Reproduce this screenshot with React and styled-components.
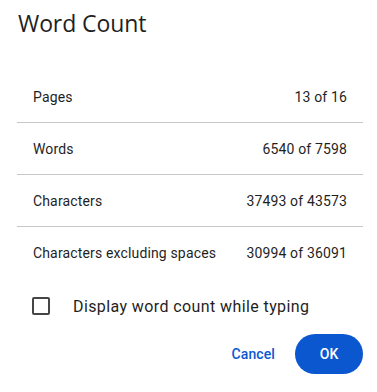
import React from "react";
import styled, { createGlobalStyle } from "styled-components";

const Global = createGlobalStyle`
  html, body { margin: 0; padding: 0; background: #ffffff; }
  body { font-family: Roboto, "Liberation Sans", Arial, sans-serif; color: #1f1f1f; }
`;

const Dialog = styled.div`
  width: 377px;
  height: 392px;
  box-sizing: border-box;
  display: flex;
  flex-direction: column;
  padding: 0 14px 0 17px;
`;

const Title = styled.h1`
  margin: 8px 0 0 1px;
  font-family: "Open Sans", Roboto, sans-serif;
  font-weight: 400;
  font-size: 23px;
  line-height: 31px;
  color: #1f1f1f;
  letter-spacing: -0.1px;
`;

const List = styled.div`
  margin-top: 32px;
  display: flex;
  flex-direction: column;
`;

const Row = styled.div`
  height: 52px;
  box-sizing: border-box;
  display: flex;
  align-items: center;
  justify-content: space-between;
  padding: 0 16px;
  font-size: 14px;
  letter-spacing: 0.15px;
  color: #1f1f1f;
  border-bottom: ${(p) => (p.$last ? "none" : "1px solid #c7c7c7")};
`;

const CheckRow = styled.label`
  display: flex;
  align-items: center;
  gap: 23px;
  padding: 0 15px;
  height: 54px;
  font-size: 16px;
  letter-spacing: 0.4px;
  color: #1f1f1f;
`;

const Box = styled.span`
  width: 18px;
  height: 18px;
  box-sizing: border-box;
  border: 2px solid #444746;
  border-radius: 2px;
  flex: none;
`;

const Actions = styled.div`
  display: flex;
  justify-content: flex-end;
  align-items: center;
  gap: 8px;
  margin-top: 1px;
`;

const Button = styled.button`
  height: 40px;
  border: none;
  border-radius: 20px;
  font-family: Roboto, sans-serif;
  font-size: 14px;
  font-weight: 500;
  letter-spacing: 0.1px;
  cursor: pointer;
  padding: 0 ${(p) => (p.$primary ? "24px" : "12px")};
  min-width: ${(p) => (p.$primary ? "68px" : "auto")};
  background: ${(p) => (p.$primary ? "#0b57d0" : "transparent")};
  color: ${(p) => (p.$primary ? "#ffffff" : "#0b57d0")};
`;

const rows = [
  ["Pages", "13 of 16"],
  ["Words", "6540 of 7598"],
  ["Characters", "37493 of 43573"],
  ["Characters excluding spaces", "30994 of 36091"],
];

export default function App() {
  return (
    <>
      <Global />
      <Dialog>
        <Title>Word Count</Title>
        <List>
          {rows.map(([k, v], i) => (
            <Row key={k} $last={i === rows.length - 1}>
              <span>{k}</span>
              <span>{v}</span>
            </Row>
          ))}
        </List>
        <CheckRow>
          <Box />
          <span>Display word count while typing</span>
        </CheckRow>
        <Actions>
          <Button>Cancel</Button>
          <Button $primary>OK</Button>
        </Actions>
      </Dialog>
    </>
  );
}
